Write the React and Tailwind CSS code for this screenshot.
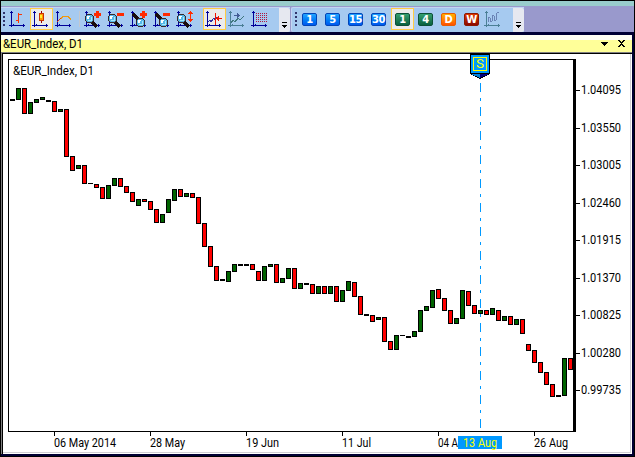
import React from "react";

const UP = "#006400";
const DOWN = "#ff0000";

// Each candle: [top, bottom, kind]; kind is g (up), r (down) or b (flat)
const candles = [
  [99, 101, "b"], [88, 100, "g"], [88, 114, "r"], [102, 114, "g"], [99, 103, "g"], [97, 100, "g"],
  [100, 102, "b"], [101, 112, "r"], [109, 112, "g"], [109, 157, "r"], [156, 171, "r"], [165, 169, "g"],
  [165, 184, "r"], [183, 184, "b"], [184, 188, "r"], [187, 199, "r"], [185, 199, "g"], [178, 186, "g"],
  [178, 187, "r"], [186, 193, "r"], [192, 202, "r"], [199, 206, "g"], [199, 202, "r"], [201, 210, "r"],
  [209, 223, "r"], [214, 223, "g"], [199, 213, "g"], [189, 201, "g"], [189, 197, "r"], [193, 197, "g"],
  [193, 198, "r"], [197, 224, "r"], [223, 247, "r"], [246, 267, "r"], [266, 281, "r"], [279, 281, "b"],
  [271, 282, "g"], [264, 272, "g"], [264, 266, "b"], [264, 266, "b"], [264, 270, "r"], [271, 281, "r"],
  [266, 281, "g"], [264, 267, "g"], [264, 283, "r"], [278, 283, "g"], [268, 279, "g"], [268, 289, "r"],
  [283, 289, "g"], [283, 285, "b"], [284, 294, "r"], [286, 294, "g"], [286, 294, "r"], [286, 294, "g"],
  [286, 302, "r"], [290, 302, "g"], [281, 291, "g"], [282, 297, "r"], [296, 315, "r"], [314, 316, "b"],
  [315, 322, "r"], [317, 320, "g"], [317, 342, "r"], [341, 350, "r"], [335, 350, "g"], [335, 336, "b"],
  [336, 338, "b"], [331, 337, "g"], [310, 332, "g"], [306, 311, "g"], [290, 308, "g"], [289, 299, "r"],
  [298, 311, "r"], [310, 324, "r"], [318, 324, "g"], [290, 319, "g"], [291, 306, "r"], [305, 314, "r"],
  [310, 314, "g"], [310, 315, "r"], [308, 315, "g"], [310, 321, "r"], [316, 321, "g"], [316, 325, "r"],
  [319, 325, "g"], [319, 334, "r"], [344, 351, "r"], [350, 363, "r"], [362, 373, "r"], [372, 385, "r"],
  [384, 397, "r"], [395, 397, "b"], [358, 396, "g"], [358, 370, "r"],
];

const prices = [
  [90, "1.04095"], [128, "1.03550"], [165, "1.03005"], [203, "1.02460"], [240, "1.01915"],
  [278, "1.01370"], [315, "1.00825"], [353, "1.00280"], [390, "0.99735"],
];

const dates = [
  [54, "06 May 2014", 62], [150, "28 May", 35], [246, "19 Jun", 33],
  [342, "11 Jul", 29], [438, "04 A", 20], [534, "26 Aug", 34],
];

function Label({ x, y, w, fill = "#000", children }) {
  return (
    <text x={x} y={y} fill={fill} textLength={w} lengthAdjust="spacingAndGlyphs" className="font-['Roboto','Liberation_Sans',sans-serif] text-[12.5px]">
      {children}
    </text>
  );
}

function Axes({ color = "#000099" }) {
  return (
    <g fill={color}>
      <path d="M4 3h1v16h-1zM3 4h3v1h-3zM2 17h16v1h-16zM16 16h1v3h-1zM6 16h1v1h-1z" />
    </g>
  );
}

function Lens({ x = 0, y = 0, flip = false }) {
  return (
    <g transform={`translate(${x} ${y})`}>
      {flip ? <path d="M1 1l6 6" stroke="#1a0d0d" strokeWidth="3" /> : <path d="M7 8l5 5" stroke="#1a0d0d" strokeWidth="3" />}
      <g transform={flip ? "translate(4 5)" : ""}>
        <path d="M2 0h5v1h1v1h1v5h-1v1h-1v1h-5v-1h-1v-1h-1v-5h1v-1h1z" fill="#3c2a2a" />
        <path d="M2 1h5v1h1v5h-1v1h-5v-1h-1v-5h1z" fill="#55b8e8" />
        <path d="M2 2h3v1h-1v2h-2z" fill="#fff" />
        <path d="M3 6h4v1h-4zM6 3h1v3h-1z" fill="#a7e8fa" />
      </g>
    </g>
  );
}

function Plus() {
  return <path d="M14 3h3v2h2v3h-2v2h-3v-2h-2v-3h2z" fill="#ff2a00" />;
}
function Minus() {
  return <path d="M12 5h7v3h-7z" fill="#ff2a00" />;
}

function Tool({ active, children }) {
  return (
    <div className={active ? "h-[22px] w-[23px] shrink-0 bg-[#ebebeb] outline outline-1 -outline-offset-1 outline-[#ffcc44]" : "h-[22px] w-[23px] shrink-0"}>
      <svg width="23" height="22" viewBox="0 0 23 22" shapeRendering="crispEdges" fill="none">
        {children}
      </svg>
    </div>
  );
}

function Sep() {
  return (
    <div className="mt-[3px] flex h-4 w-[6px] shrink-0 justify-center">
      <div className="h-full w-px bg-[#c3c8d0]" />
    </div>
  );
}

function Grip() {
  return (
    <div className="flex h-[22px] w-[3px] shrink-0 flex-col justify-center gap-[2px]">
      {[0, 1, 2, 3].map((i) => (
        <span key={i} className="h-[2px] w-[2px] bg-[#30336b]" />
      ))}
    </div>
  );
}

function Overflow() {
  return (
    <div className="flex h-[24px] w-[11px] shrink-0 items-end justify-center rounded-r-[2px] bg-[#e6e8f0] pb-[4px]">
      <svg width="5" height="6" viewBox="0 0 5 6" shapeRendering="crispEdges">
        <path d="M0 0h5v1h-5zM0 3h5v1h-1v1h-1v1h-1v-1h-1v-1h-1z" fill="#000" />
      </svg>
    </div>
  );
}

const tones = {
  blue: "border-[#0044b8] bg-linear-to-b from-[#22a4ff] to-[#0058ee]",
  green: "border-[#0c5038] bg-linear-to-b from-[#35a070] to-[#08613f]",
  orange: "border-[#e85b00] bg-linear-to-b from-[#ffb000] to-[#ff4f00]",
  red: "border-[#8c1600] bg-linear-to-b from-[#e03800] to-[#8c0800]",
};

function Frame({ tone, label, active }) {
  return (
    <div
      className={
        "flex h-[22px] w-[23px] shrink-0 items-start pt-[5px] pl-[4px] " +
        (active ? "bg-[#ebebeb] outline outline-1 -outline-offset-1 outline-[#ffcc44]" : "")
      }
    >
      <div
        className={
          "flex h-[13px] w-[15px] items-center justify-center rounded-[2px] border font-['DejaVu_Sans',sans-serif] text-[10px] leading-none font-bold tracking-[-0.5px] text-white " +
          tones[tone]
        }
      >
        {label}
      </div>
    </div>
  );
}

function Toolbars() {
  return (
    <div className="flex h-[26px] bg-[#9999cc] pt-px">
      <div className="flex h-[25px] w-[289px] items-start border-t border-[#c4d5f3] bg-[#a6caf0] pl-[2px]">
        <Grip />
        <div className="w-px" />
        <Tool>
          <Axes />
          <path d="M11 5h1v10h-1zM9 12h2v1h-2zM12 6h3v1h-3z" fill="#ff3300" />
        </Tool>
        <Tool active>
          <Axes />
          <path d="M11 3h1v12h-1z" fill="#990000" />
          <path d="M9 5h5v8h-5z" fill="#cc3300" />
          <path d="M10 6h3v6h-3z" fill="#ff9900" />
          <path d="M10 7h2v3h-2z" fill="#ffee33" />
        </Tool>
        <Tool>
          <Axes />
          <path d="M4 14l4-4" stroke="#e04010" strokeWidth="1.3" />
          <path d="M8 10.500l2-2h5l3 3" stroke="#f09a10" strokeWidth="1.3" />
        </Tool>
        <Sep />
        <Tool>
          <Axes />
          <Lens x={3} y={6} />
          <Plus />
        </Tool>
        <Tool>
          <Axes />
          <Lens x={3} y={6} />
          <Minus />
        </Tool>
        <Tool>
          <Axes />
          <Lens x={4} y={5} flip />
          <Plus />
        </Tool>
        <Tool>
          <Axes />
          <Lens x={4} y={5} flip />
          <Minus />
        </Tool>
        <Tool>
          <Axes />
          <Lens x={3} y={6} />
          <path d="M16 3h1v11h-1zM15 4h3v1h-3zM14 5h5v1h-5zM14 11h5v1h-5zM15 12h3v1h-3z" fill="#ff2a00" />
        </Tool>
        <Sep />
        <Tool active>
          <Axes />
          <path d="M5 14l2-2 1 2 3-4 1 2 2-3" stroke="#3030a0" />
          <path d="M12 5h1v12h-1zM13 10h6v1h-6zM14 9h1v3h-1zM15 8h1v5h-1z" fill="#ee1100" />
        </Tool>
        <Tool>
          <Axes color="#4b7f96" />
          <path d="M5 15l2-3 2 2 3-4 2 2 4-4" stroke="#3f777d" strokeWidth="1.2" />
          <path d="M8 7h6v1h-6zM11 5h1v5h-1zM12 6h1v3h-1z" fill="#435c96" />
        </Tool>
        <Tool>
          <Axes />
          <path d="M7 5.500h11M7 7.500h11M7 9.500h11M7 11.500h11M7 13.500h11" stroke="#b01840" strokeDasharray="1 1" />
        </Tool>
        <div className="grow" />
        <Overflow />
      </div>
      <div className="w-px" />
      <div className="flex h-[25px] w-[233px] items-start rounded-l-[2px] border-t border-l border-[#c4d5f3] bg-[#a6caf0] pl-[3px]">
        <Grip />
        <Frame tone="blue" label="1" />
        <Frame tone="blue" label="5" />
        <Frame tone="blue" label="15" />
        <Frame tone="blue" label="30" />
        <div className="w-px" />
        <Frame tone="green" label="1" active />
        <Frame tone="green" label="4" />
        <Frame tone="orange" label="D" />
        <Frame tone="red" label="W" />
        <Tool>
          <g transform="translate(-1 0)">
            <Axes color="#4b7f96" />
            <path d="M6 14v-4l1-1 1 1v3l1 1 1-1v-5l1-1 1 1v4l1 1 1-1v-5l1-2 2-1" stroke="#6a83b5" />
          </g>
        </Tool>
        <div className="grow" />
        <Overflow />
      </div>
    </div>
  );
}

function TitleBar() {
  return (
    <div className="flex h-[17px] items-center justify-between bg-linear-to-b from-[#fffff4] from-30% to-[#ffff99] to-30% pr-[7px] pl-[2px]">
      <svg width="90" height="17" viewBox="0 0 90 17">
        <Label x={0} y={13} w={80}>&amp;EUR_Index, D1</Label>
      </svg>
      <svg width="24" height="7" viewBox="0 0 24 7" shapeRendering="crispEdges">
        <path d="M0 2h7v1h-1v1h-1v1h-1v1h-1v-1h-1v-1h-1v-1h-1z" fill="#000" />
        <path d="M17 0h2v1h1v1h1v-1h1v-1h2v1h-1v1h-1v1h-1v1h1v1h1v1h1v1h-2v-1h-1v-1h-1v1h-1v1h-2v-1h1v-1h1v-1h1v-1h-1v-1h-1v-1h-1z" fill="#000" />
      </svg>
    </div>
  );
}

function Chart() {
  return (
    <svg width="627" height="398" viewBox="3 54 627 398" className="block" shapeRendering="crispEdges">
      <path d="M8 59h566v1h-565v372h-1zM8 431h567v1h-567z" fill="#000" />
      <path d="M480.500 83V431" stroke="#0099ff" strokeDasharray="9 6 3 6" />
      {candles.map(([top, bottom, kind], i) => (
        <g key={i}>
          <rect x={10 + 6 * i} y={top} width="5" height={bottom - top} fill="#000" />
          {kind !== "b" && (
            <rect x={11 + 6 * i} y={top + 1} width="3" height={bottom - top - 2} fill={kind === "g" ? UP : DOWN} />
          )}
        </g>
      ))}
      <rect x="573" y="59" width="3" height="373" fill="#000" />
      {prices.map(([y, t]) => (
        <g key={t}>
          <rect x="576" y={y} width="4" height="1" fill="#000" />
          <Label x={581} y={y + 4} w={40}>{t}</Label>
        </g>
      ))}
      {dates.map(([x, t, w]) => (
        <g key={t}>
          <rect x={x} y="432" width="1" height="4" fill="#000" />
          <Label x={x} y={447} w={w}>{t}</Label>
        </g>
      ))}
      <rect x="458" y="436" width="44" height="13" fill="#0099ff" />
      <Label x={463} y={447} w={34} fill="#ffff00">13 Aug</Label>
      <Label x={13} y={75} w={81}>&amp;EUR_Index, D1</Label>
      <path d="M470 54h20v20l-10 5-10-5z" fill="#000" />
      <path d="M471 55h18v18h-18z" fill="#0099ff" />
      <path d="M471 74h9v4z" fill="#0080d8" />
      <path d="M480 74h9l-9 4z" fill="#000080" />
      <rect x="473.500" y="57.500" width="13" height="13" fill="none" stroke="#ffff00" />
      <Label x={476} y={68} w={8} fill="#ffff00">S</Label>
    </svg>
  );
}

export default function App() {
  return (
    <div className="flex h-[457px] w-[635px] flex-col overflow-hidden border border-black bg-[#000033]">
      <div className="h-[5px] shrink-0 bg-[#99cccc]" />
      <Toolbars />
      <div className="h-[3px] shrink-0" />
      <div className="mr-[2px] bg-white">
        <TitleBar />
        <div className="h-px bg-[#808080]" />
        <div className="border-l border-[#808080]">
          <div className="border-t border-l border-black pb-px">
            <div className="mr-px border-r border-b border-[#d0d0d4]">
              <Chart />
            </div>
          </div>
        </div>
      </div>
    </div>
  );
}
